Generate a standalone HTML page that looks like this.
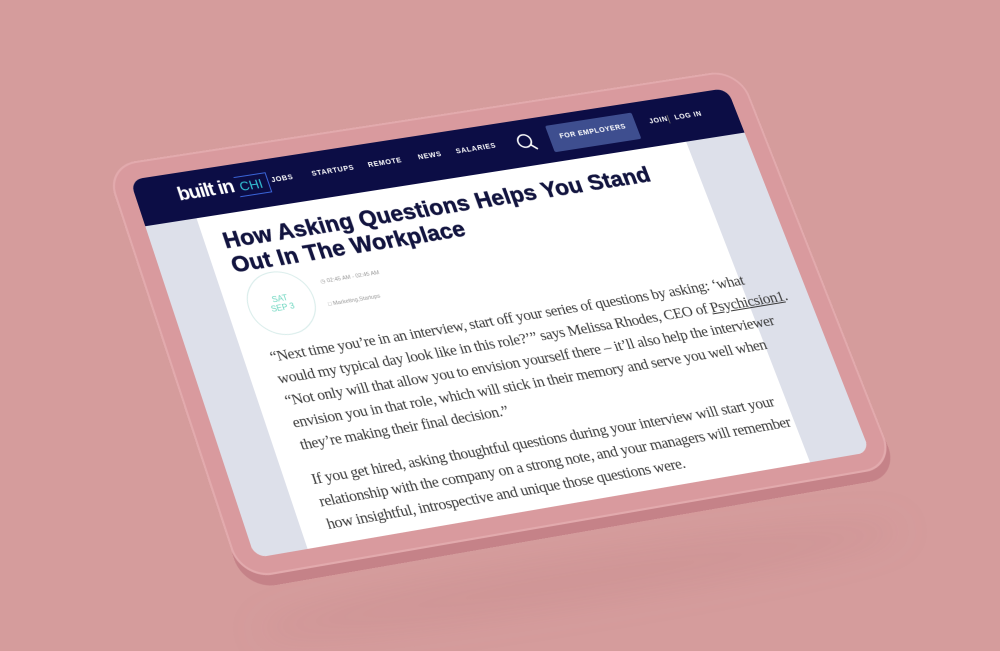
<!DOCTYPE html>
<html><head><meta charset="utf-8"><style>
html,body{margin:0;padding:0;}
body{width:1000px;height:640px;overflow:hidden;background:#d59c9c;position:relative;font-family:"Liberation Sans",sans-serif;}
.shadow{position:absolute;left:250px;top:560px;width:660px;height:40px;border-radius:50%;background:rgba(150,80,85,0.10);filter:blur(18px);transform:rotate(-9deg);}
.frame{position:absolute;left:0;top:0;width:600px;height:380px;transform-origin:0 0;
transform:matrix3d(1.02898,-0.14922,0,0.00004673, 0.30492,0.94218,0,-0.00009418, 0,0,1,0, 130,180,0,1);}
.edge{position:absolute;left:-19px;top:-12px;width:638px;height:420px;border-radius:30px;background:#c58288;}
.body{position:absolute;left:-19px;top:-18px;width:638px;height:416px;border-radius:30px;background:#d99a9e;box-shadow:inset 0 0 0 2px #e2aaad;}
.screen{position:absolute;left:0;top:0;width:600px;height:380px;border-radius:12px;overflow:hidden;background:#fff;}
.side{position:absolute;top:48px;bottom:0;background:#dde0ea;}
.nav{position:absolute;left:0;top:0;width:600px;height:48px;background:#0c0d45;color:#fff;}
.nav .i{position:absolute;top:19px;font-size:7px;font-weight:bold;letter-spacing:.6px;}
.logo{position:absolute;left:40px;top:12px;font-size:19px;font-weight:bold;letter-spacing:-1px;}
.logo span{font-size:13px;color:#35c6d9;font-weight:normal;border:1.5px solid #3a64d8;border-left-color:transparent;padding:2px 5px 2px 2px;margin-left:3px;letter-spacing:0;}
.btn{position:absolute;left:410px;top:10px;width:88px;height:28px;background:#3e4e8f;border-radius:2px;font-size:7px;font-weight:bold;text-align:center;line-height:28px;letter-spacing:.5px;}
h1{position:absolute;left:68px;top:62px;margin:0;font-size:22px;line-height:25px;color:#12143f;font-weight:900;letter-spacing:.2px;white-space:nowrap;-webkit-text-stroke:.5px #12143f;}
.circle{position:absolute;left:70px;top:112px;width:64px;height:64px;border:1px solid #d8ecea;border-radius:50%;color:#6cd6bf;font-size:8px;text-align:center;line-height:9px;box-sizing:border-box;padding-top:22px;}
.meta{position:absolute;font-size:5.5px;color:#999;white-space:nowrap;}
.txt{position:absolute;left:75px;font-family:"Liberation Serif",serif;font-size:14.8px;line-height:22px;color:#3a3a3a;white-space:nowrap;letter-spacing:-.35px;}
</style></head><body>
<div class="shadow"></div>
<div class="frame">
 <div class="edge"></div>
 <div class="body"></div>
 <div class="screen">
  <div class="side" style="left:0;width:50px"></div>
  <div class="side" style="right:0;width:60px"></div>
  <div class="nav">
   <div class="logo">built in<span>CHI</span></div>
   <div class="i" style="left:132px">JOBS</div>
   <div class="i" style="left:172px">STARTUPS</div>
   <div class="i" style="left:228px">REMOTE</div>
   <div class="i" style="left:278px">NEWS</div>
   <div class="i" style="left:316px">SALARIES</div>
   <svg style="position:absolute;left:376px;top:13px" width="22" height="22" viewBox="0 0 22 22"><circle cx="9" cy="9" r="6.5" fill="none" stroke="#fff" stroke-width="1.6"/><path d="M13.7 13.7L19 19" stroke="#fff" stroke-width="1.8"/></svg>
   <div class="btn">FOR EMPLOYERS</div>
   <div class="i" style="left:512px">JOIN</div>
   <div style="position:absolute;left:531px;top:18px;width:1px;height:9px;background:#666"></div>
   <div class="i" style="left:538px">LOG IN</div>
  </div>
  <h1>How Asking Questions Helps You Stand<br>Out In The Workplace</h1>
  <div class="circle">SAT<br>SEP 3</div>
  <div class="meta" style="left:145px;top:127px">&#9719; 02:45 AM - 02:45 AM</div>
  <div class="meta" style="left:145px;top:150px">&#9633; Marketing,Startups</div>
  <div class="txt" style="top:184px">“Next time you’re in an interview, start off your series of questions by asking: ‘what<br>would my typical day look like in this role?’” says Melissa Rhodes, CEO of <u>Psychicsion1</u>.<br>“Not only will that allow you to envision yourself there – it’ll also help the interviewer<br>envision you in that role, which will stick in their memory and serve you well when<br>they’re making their final decision.”</div>
  <div class="txt" style="top:306px">If you get hired, asking thoughtful questions during your interview will start your<br>relationship with the company on a strong note, and your managers will remember<br>how insightful, introspective and unique those questions were.</div>
 </div>
</div>
</body></html>
